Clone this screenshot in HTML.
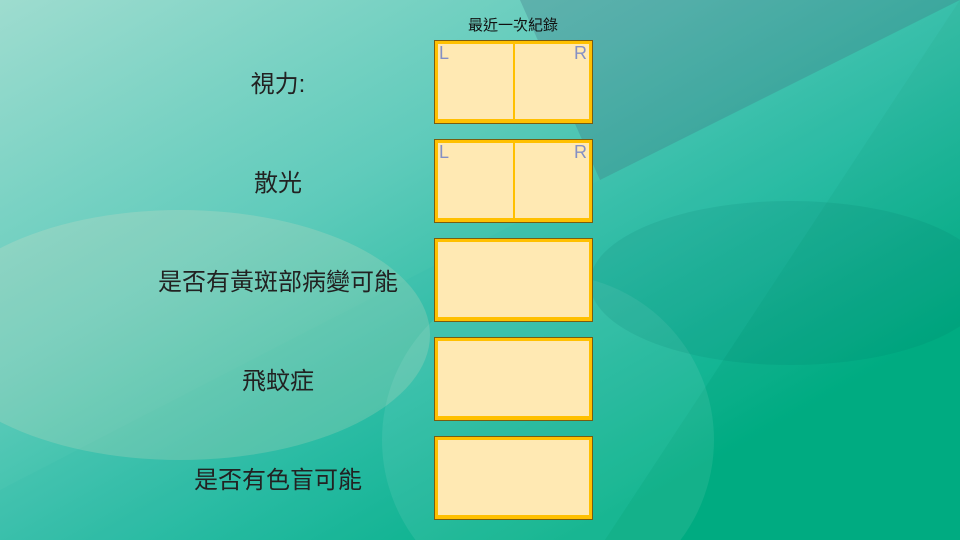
<!DOCTYPE html><html style="margin:0;width:960px;height:540px;overflow:hidden"><head><style>
body{margin:0;width:960px;height:540px;overflow:hidden;position:relative;font-family:"Liberation Sans","Noto Sans CJK TC",sans-serif;}
.box{position:absolute;left:434px;width:157px;height:82px;border:1px solid #7a5c10;background:#ffc000;}
.in{position:absolute;left:3px;top:3px;right:3px;bottom:4px;background:#ffe9b3;}
.div{position:absolute;left:78px;top:0;width:2px;height:82px;background:#ffc000;}
.L,.R{position:absolute;top:2px;font-size:18px;color:#8590c4;}
.L{left:4px}.R{right:5px}
.lab{position:absolute;font-size:24px;color:#222;width:400px;text-align:center;left:78px;}
</style></head><body>
<svg width="960" height="540" style="position:absolute;left:0;top:0;display:block">
<defs>
<linearGradient id="g" x1="0" y1="0" x2="1" y2="1">
<stop offset="0" stop-color="#9edccf"/><stop offset="0.35" stop-color="#5fcbbb"/><stop offset="0.6" stop-color="#26bba0"/><stop offset="0.8" stop-color="#00b084"/><stop offset="1" stop-color="#00b084"/></linearGradient>
</defs>
<rect width="960" height="540" fill="url(#g)"/>
<polygon points="520,0 960,0 600,180" fill="rgba(60,110,130,0.3)"/>
<polygon points="960,0 600,180 0,490 0,540 605,540" fill="rgba(40,180,170,0.12)"/>
<polygon points="960,0 960,540 605,540" fill="rgba(0,110,100,0.08)"/>
<ellipse cx="180" cy="335" rx="250" ry="125" fill="rgba(255,225,200,0.18)"/>
<circle cx="548" cy="440" r="166" fill="rgba(255,255,255,0.08)"/>
<ellipse cx="790" cy="283" rx="200" ry="82" fill="rgba(0,110,100,0.12)"/>
</svg>
<div style="position:absolute;left:468px;top:14px;font-size:15px;color:#111">最近一次紀錄</div>
<div class="lab" style="top:64px">視力:</div>
<div class="lab" style="top:163px">散光</div>
<div class="lab" style="top:262px">是否有黃斑部病變可能</div>
<div class="lab" style="top:361px">飛蚊症</div>
<div class="lab" style="top:460px">是否有色盲可能</div>
<div class="box" style="top:40px"><div class="in"></div><div class="div"></div><span class="L">L</span><span class="R">R</span></div>
<div class="box" style="top:139px"><div class="in"></div><div class="div"></div><span class="L">L</span><span class="R">R</span></div>
<div class="box" style="top:238px"><div class="in"></div></div>
<div class="box" style="top:337px"><div class="in"></div></div>
<div class="box" style="top:436px"><div class="in"></div></div>
</body></html>
